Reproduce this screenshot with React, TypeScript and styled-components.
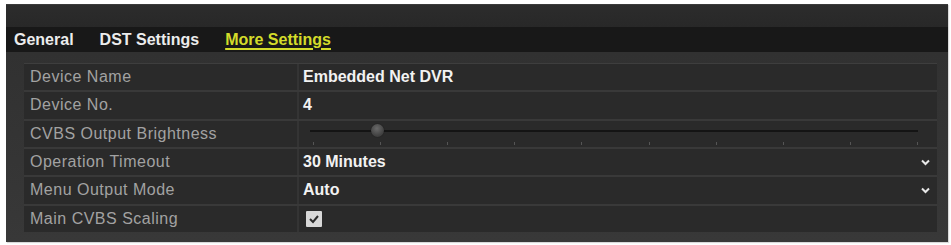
import React from "react";
import styled, { createGlobalStyle } from "styled-components";

const Global = createGlobalStyle`
  html, body { margin: 0; padding: 0; background: #ffffff; }
  body { font-family: "Liberation Sans", Arial, sans-serif; }
`;

const Page = styled.div`
  padding: 4px 3px 3px 6px;
`;

const Panel = styled.div`
  width: 942px;
  height: 238px;
  background: #262626;
  display: flex;
  flex-direction: column;
  box-shadow: 1px 1px 1px rgba(0,0,0,0.15);
`;

const Header = styled.div`
  height: 23px;
  background: linear-gradient(#2c2c2c, #282828);
  border-top: 1px solid #3a3a3a;
  box-sizing: border-box;
`;

const TabBar = styled.div`
  height: 25px;
  background: #181818;
  display: flex;
  align-items: center;
  gap: 26px;
  padding-left: 8px;
`;

const Tab = styled.div<{ $active?: boolean }>`
  font-size: 16px;
  font-weight: bold;
  color: ${(p) => (p.$active ? "#d4dc2a" : "#ececec")};
  text-decoration: ${(p) => (p.$active ? "underline" : "none")};
  text-decoration-thickness: 2px;
  text-underline-offset: 3px;
  line-height: 18px;
`;

const Content = styled.div`
  flex: 1;
  background: linear-gradient(#313131, #383838);
  padding: 11px 11px 10px 18px;
`;

const Table = styled.div`
  height: 169px;
  display: grid;
  grid-template-rows: repeat(6, 1fr);
  row-gap: 2px;
  background: #393939;
  border-top: 1px solid #3e3e3e;
  box-sizing: border-box;
`;

const Row = styled.div`
  display: grid;
  grid-template-columns: 273px 1fr;
  column-gap: 2px;
  background: #343434;
`;

const Label = styled.div`
  background: #2a2a2a;
  color: #a2a2a2;
  font-size: 16px;
  letter-spacing: 0.5px;
  display: flex;
  align-items: center;
  padding-left: 6px;
`;

const Value = styled.div`
  background: #2a2a2a;
  color: #f2f2f2;
  font-size: 16px;
  font-weight: bold;
  display: flex;
  align-items: center;
  justify-content: space-between;
  padding: 0 7px 0 4px;
  position: relative;
`;

const SliderWrap = styled.div`
  flex: 1;
  height: 100%;
  display: flex;
  flex-direction: column;
  justify-content: flex-end;
  padding: 0 12px 1px 7px;
`;

const Track = styled.div`
  position: relative;
  height: 2px;
  background: #141414;
  margin-bottom: 10px;
`;

const Thumb = styled.div`
  position: absolute;
  left: 61px;
  top: -6px;
  width: 13px;
  height: 13px;
  border-radius: 50%;
  background: radial-gradient(circle at 45% 35%, #6a6a6a, #444 60%, #333);
  box-shadow: 0 0 1px #111;
`;

const Ticks = styled.div`
  display: flex;
  justify-content: space-between;
  padding: 0 0 0 3px;
  margin-bottom: 2px;
`;

const Tick = styled.div`
  width: 1px;
  height: 3px;
  background: #555;
`;

const CheckBox = styled.div`
  width: 16px;
  height: 16px;
  background: #d8d8d8;
  border-radius: 1px;
  margin-left: 3px;
  display: flex;
  align-items: center;
  justify-content: center;
`;

const Chevron = () => (
  <svg width="9" height="7" viewBox="0 0 9 7">
    <path d="M1 1.5 L4.5 5 L8 1.5" stroke="#e8e8e8" strokeWidth="2" fill="none" />
  </svg>
);

const Check = () => (
  <svg width="12" height="10" viewBox="0 0 12 10">
    <path d="M2 5 L5 8 L10 2" stroke="#2a2a2a" strokeWidth="2" fill="none" />
  </svg>
);

export default function App() {
  return (
    <>
      <Global />
      <Page>
        <Panel>
          <Header />
          <TabBar>
            <Tab>General</Tab>
            <Tab>DST Settings</Tab>
            <Tab $active>More Settings</Tab>
          </TabBar>
          <Content>
            <Table>
              <Row>
                <Label>Device Name</Label>
                <Value>Embedded Net DVR</Value>
              </Row>
              <Row>
                <Label>Device No.</Label>
                <Value>4</Value>
              </Row>
              <Row>
                <Label>CVBS Output Brightness</Label>
                <Value>
                  <SliderWrap>
                    <Track>
                      <Thumb />
                    </Track>
                    <Ticks>
                      {Array.from({ length: 10 }).map((_, i) => (
                        <Tick key={i} />
                      ))}
                    </Ticks>
                  </SliderWrap>
                </Value>
              </Row>
              <Row>
                <Label>Operation Timeout</Label>
                <Value>
                  <span>30 Minutes</span>
                  <Chevron />
                </Value>
              </Row>
              <Row>
                <Label>Menu Output Mode</Label>
                <Value>
                  <span>Auto</span>
                  <Chevron />
                </Value>
              </Row>
              <Row>
                <Label>Main CVBS Scaling</Label>
                <Value>
                  <CheckBox>
                    <Check />
                  </CheckBox>
                </Value>
              </Row>
            </Table>
          </Content>
        </Panel>
      </Page>
    </>
  );
}
